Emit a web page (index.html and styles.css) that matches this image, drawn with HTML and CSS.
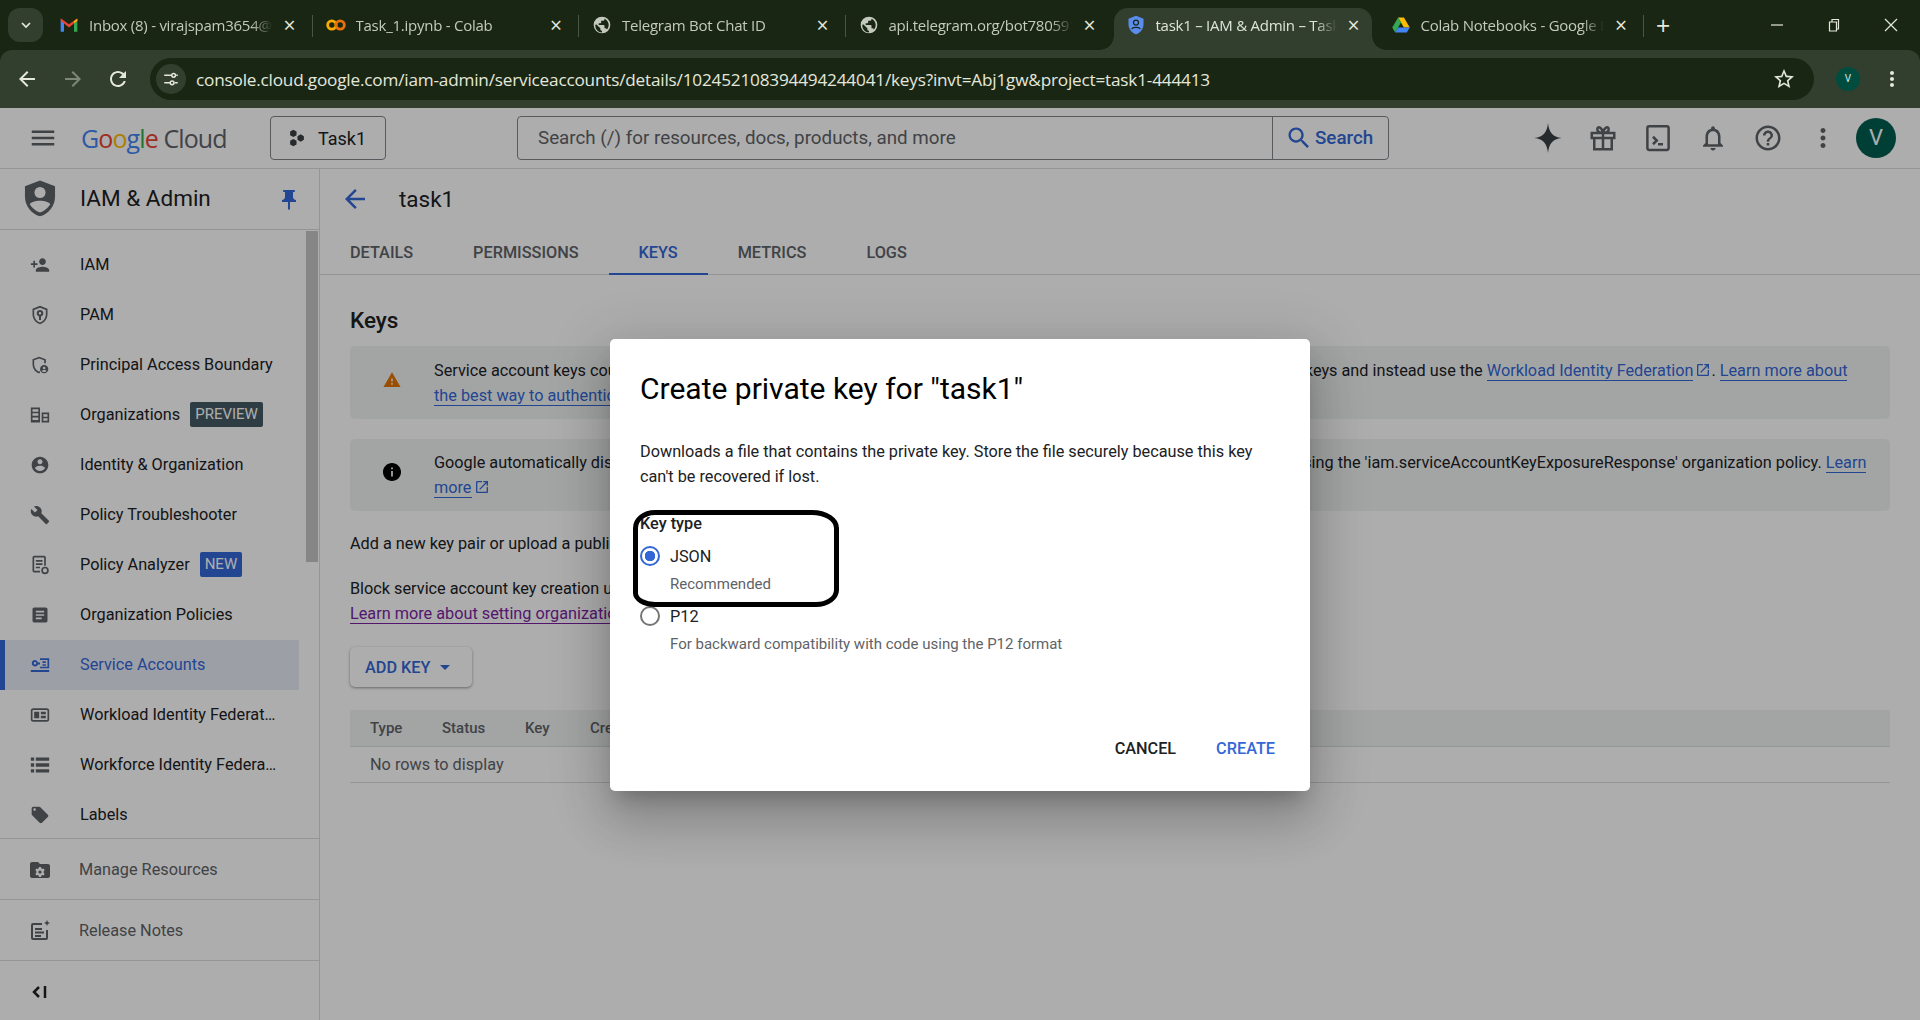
FILE: index.html
```html
<!DOCTYPE html>
<html>
  <head>
    <title>task1 – IAM &amp; Admin</title>
    <link rel="stylesheet" href="styles.css">
  </head>
  <body>
    <!-- browser chrome -->
    <div class="browser">
    <div class="tabstrip">
      <div class="tab-search"><svg viewBox="0 0 24 24" width="16" height="16"><path d="M6 9l6 6 6-6" fill="none" stroke="#e4e8dc" stroke-width="2.6"/></svg></div>
      <div class="tab">
        <svg class="favicon" viewBox="0 0 24 24"><path d="M2 20V6l4 2v12z" fill="#4285f4"/><path d="M22 20V6l-4 2v12z" fill="#34a853"/><path d="M2 4v3l10 8V11z" fill="#ea4335"/><path d="M22 4v3l-10 8V11z" fill="#ea4335"/><path d="M18 7.500l4-3V7l-4 3z" fill="#fbbc04"/></svg>
        <span class="tab-title">Inbox (8) - virajspam3654@gmail.com</span><span class="tab-close">×</span>
      </div>
      <div class="tab">
        <svg class="favicon" viewBox="0 0 24 24"><circle cx="7" cy="12" r="5" fill="none" stroke="#f9ab00" stroke-width="3.400"/><circle cx="17" cy="12" r="5" fill="none" stroke="#e8710a" stroke-width="3.400"/></svg>
        <span class="tab-title">Task_1.ipynb - Colab</span><span class="tab-close">×</span>
      </div>
      <div class="tab">
        <svg class="favicon" viewBox="0 0 24 24"><path fill="#c4c9bd" d="M12 2a10 10 0 1 0 0 20 10 10 0 0 0 0-20zM4 12l1-1 5 5v1c0 1 1 2 2 2v1.900A8 8 0 0 1 4 12zm13.900 5.400c-.3-.8-1-1.400-1.900-1.400h-1v-3c0-.6-.4-1-1-1H8v-2h2c.6 0 1-.4 1-1V7h2c1.100 0 2-.9 2-2v-.4a8 8 0 0 1 2.900 12.800z"/></svg>
        <span class="tab-title">Telegram Bot Chat ID</span><span class="tab-close">×</span>
      </div>
      <div class="tab tab-last">
        <svg class="favicon" viewBox="0 0 24 24"><path fill="#c4c9bd" d="M12 2a10 10 0 1 0 0 20 10 10 0 0 0 0-20zM4 12l1-1 5 5v1c0 1 1 2 2 2v1.900A8 8 0 0 1 4 12zm13.900 5.400c-.3-.8-1-1.400-1.900-1.400h-1v-3c0-.6-.4-1-1-1H8v-2h2c.6 0 1-.4 1-1V7h2c1.100 0 2-.9 2-2v-.4a8 8 0 0 1 2.900 12.800z"/></svg>
        <span class="tab-title">api.telegram.org/bot7805912345</span><span class="tab-close">×</span>
      </div>
      <div class="tab tab-active">
        <svg class="favicon" viewBox="0 0 24 24"><path fill="#5b8def" d="M12 1L3 4.500V11c0 5.500 3.800 10.600 9 12 5.200-1.400 9-6.500 9-12V4.500z"/><circle cx="12" cy="9" r="3" fill="none" stroke="#1a2614" stroke-width="1.500"/><path d="M7 17c1-3 9-3 10 0" fill="none" stroke="#1a2614" stroke-width="1.500"/></svg>
        <span class="tab-title">task1 – IAM &amp; Admin – Task1 – Google Cloud</span><span class="tab-close">×</span>
      </div>
      <div class="tab">
        <svg class="favicon" viewBox="0 0 24 24"><path d="M8.500 3h7l7 12h-7z" fill="#fbbc04"/><path d="M8.500 3l-7 12 3.500 6 7-12z" fill="#34a853"/><path d="M5 21h14l3.500-6h-14z" fill="#4285f4"/></svg>
        <span class="tab-title">Colab Notebooks - Google Drive</span><span class="tab-close">×</span>
      </div>
      <div class="tab-new">+</div>
      <div class="win-controls">
        <svg viewBox="0 0 16 16" width="16" height="16"><path d="M2 8h12" stroke="#e4e8dc" stroke-width="1.200"/></svg>
        <svg viewBox="0 0 16 16" width="16" height="16"><path d="M3.500 5h7v9h-7zM6 5V2.500h6.500V12H10.500" fill="none" stroke="#e4e8dc" stroke-width="1.200"/></svg>
        <svg viewBox="0 0 16 16" width="16" height="16"><path d="M2 2l12 12M14 2L2 14" stroke="#e4e8dc" stroke-width="1.200"/></svg>
      </div>
    </div>
    <div class="toolbar">
      <svg class="tool-icon" viewBox="0 0 24 24"><path fill="#e4e8dc" d="M20 11H7.830l5.590-5.590L12 4l-8 8 8 8 1.410-1.410L7.830 13H20v-2z"/></svg>
      <svg class="tool-icon" viewBox="0 0 24 24"><path fill="#7d8878" d="M4 11h12.170l-5.590-5.590L12 4l8 8-8 8-1.410-1.410L16.170 13H4v-2z"/></svg>
      <svg class="tool-icon" viewBox="0 0 24 24"><path fill="#e4e8dc" d="M17.650 6.350C16.200 4.900 14.210 4 12 4c-4.420 0-7.990 3.580-7.990 8s3.570 8 7.990 8c3.730 0 6.840-2.550 7.730-6h-2.080c-.82 2.330-3.040 4-5.650 4-3.310 0-6-2.690-6-6s2.690-6 6-6c1.660 0 3.140.69 4.220 1.780L13 11h7V4l-2.350 2.350z"/></svg>
      <div class="omnibox">
        <div class="site-info"><svg viewBox="0 0 24 24" width="18" height="18"><path d="M3 7h9M17 17h4M3 17h8M19 7h2" stroke="#e4e8dc" stroke-width="2" fill="none"/><circle cx="15.500" cy="7" r="2.500" fill="none" stroke="#e4e8dc" stroke-width="2"/><circle cx="13.500" cy="17" r="2.500" fill="none" stroke="#e4e8dc" stroke-width="2"/></svg></div>
        <span class="url">console.cloud.google.com/iam-admin/serviceaccounts/details/102452108394494244041/keys?invt=Abj1gw&amp;project=task1-444413</span>
        <svg class="star" viewBox="0 0 24 24" width="24" height="24"><path fill="#e4e8dc" d="M22 9.240l-7.190-.62L12 2 9.190 8.630 2 9.240l5.460 4.730L5.820 21 12 17.270 18.180 21l-1.630-7.030L22 9.240zM12 15.400l-3.760 2.270 1-4.280-3.320-2.880 4.380-.38L12 6.100l1.710 4.040 4.380.38-3.320 2.880 1 4.280L12 15.400z"/></svg>
      </div>
      <div class="profile-dot">V</div>
      <svg class="tool-icon dots" viewBox="0 0 24 24"><path fill="#e4e8dc" d="M12 8c1.100 0 2-.9 2-2s-.9-2-2-2-2 .9-2 2 .9 2 2 2zm0 2c-1.100 0-2 .9-2 2s.9 2 2 2 2-.9 2-2-.9-2-2-2zm0 6c-1.100 0-2 .9-2 2s.9 2 2 2 2-.9 2-2-.9-2-2-2z"/></svg>
    </div>
    </div>

    <!-- console header -->
    <header class="appbar">
      <svg class="burger" viewBox="0 0 24 24" width="30" height="30"><path fill="#5f6368" d="M3 18h18v-2H3v2zm0-5h18v-2H3v2zm0-7v2h18V6H3z"/></svg>
      <div class="logo"><span class="g-blue">G</span><span class="g-red">o</span><span class="g-yellow">o</span><span class="g-blue">g</span><span class="g-green">l</span><span class="g-red">e</span> <span class="logo-cloud">Cloud</span></div>
      <div class="project-btn">
        <svg viewBox="0 0 24 24" width="22" height="22"><path fill="#3c4043" d="M8 3l3.500 2v4L8 11 4.500 9V5zM16 8l3.500 2v4L16 16l-3.500-2v-4zM8 13l3.500 2v4L8 21l-3.500-2v-4z"/></svg>
        <span>Task1</span>
      </div>
      <div class="searchbar">
        <span class="search-text">Search (/) for resources, docs, products, and more</span>
        <div class="search-btn">
          <svg viewBox="0 0 24 24" width="28" height="28"><path fill="#3367d6" d="M15.500 14h-.79l-.28-.27C15.410 12.590 16 11.110 16 9.500 16 5.910 13.090 3 9.500 3S3 5.910 3 9.500 5.910 16 9.500 16c1.610 0 3.090-.59 4.230-1.570l.27.28v.79l5 4.990L20.490 19l-4.990-5zm-6 0C7.010 14 5 11.990 5 9.500S7.010 5 9.500 5 14 7.010 14 9.500 11.990 14 9.500 14z"/></svg>
          <span>Search</span>
        </div>
      </div>
      <div class="app-icons">
        <svg viewBox="0 0 24 24" width="30" height="30"><path fill="#3c4043" d="M12 0c.8 7.500 3.500 11 11 12-7.500 1-10.200 4.500-11 12-.8-7.500-3.500-11-11-12 7.500-1 10.200-4.500 11-12z"/></svg>
        <svg viewBox="0 0 24 24" width="30" height="30"><path fill="none" stroke="#5f6368" stroke-width="2" d="M3 8h18v4H3zM5 12v9h14v-9M12 8v13M12 8C9 8 7 6.500 7.500 4.500S11 3 12 8zm0 0c3 0 5-1.500 4.500-3.500S13 3 12 8z"/></svg>
        <svg viewBox="0 0 24 24" width="30" height="30"><path fill="none" stroke="#5f6368" stroke-width="2" d="M5 2.500h14a1.500 1.500 0 0 1 1.500 1.500v16a1.500 1.500 0 0 1-1.500 1.500H5A1.500 1.500 0 0 1 3.500 20V4A1.500 1.500 0 0 1 5 2.500zM8 11l3 3-3 3M12 17h4"/></svg>
        <svg viewBox="0 0 24 24" width="30" height="30"><path fill="#5f6368" d="M12 22c1.100 0 2-.9 2-2h-4c0 1.100.9 2 2 2zm6-6v-5c0-3.070-1.630-5.640-4.500-6.320V4c0-.83-.67-1.500-1.500-1.500s-1.500.67-1.500 1.500v.68C7.640 5.360 6 7.920 6 11v5l-2 2v1h16v-1l-2-2zm-2 1H8v-6c0-2.480 1.510-4.500 4-4.500s4 2.020 4 4.500v6z"/></svg>
        <svg viewBox="0 0 24 24" width="30" height="30"><path fill="#5f6368" d="M11 18h2v-2h-2v2zm1-16C6.480 2 2 6.480 2 12s4.480 10 10 10 10-4.480 10-10S17.520 2 12 2zm0 18c-4.410 0-8-3.590-8-8s3.590-8 8-8 8 3.590 8 8-3.590 8-8 8zm0-14c-2.210 0-4 1.790-4 4h2c0-1.100.9-2 2-2s2 .9 2 2c0 2-3 1.750-3 5h2c0-2.250 3-2.500 3-5 0-2.210-1.790-4-4-4z"/></svg>
        <svg viewBox="0 0 24 24" width="30" height="30"><path fill="#5f6368" d="M12 8c1.100 0 2-.9 2-2s-.9-2-2-2-2 .9-2 2 .9 2 2 2zm0 2c-1.100 0-2 .9-2 2s.9 2 2 2 2-.9 2-2-.9-2-2-2zm0 6c-1.100 0-2 .9-2 2s.9 2 2 2 2-.9 2-2-.9-2-2-2z"/></svg>
      </div>
      <div class="avatar">V</div>
    </header>

    <div class="console">
      <aside class="sidebar">
        <div class="side-head">
          <svg class="side-shield" viewBox="0 0 24 24" width="38" height="38"><path fill="#5f6368" d="M12 1L2.500 4.500V11c0 5.800 4 11 9.500 12.500 5.500-1.500 9.500-6.700 9.500-12.500V4.500z"/><circle cx="12" cy="8.500" r="3.500" fill="#fff"/><path d="M5.500 16c1.500-3 11.500-3 13 0-1.500 2.500-3.800 4.300-6.500 5.200-2.700-.9-5-2.700-6.500-5.200z" fill="#fff"/></svg>
          <span class="side-title">IAM &amp; Admin</span>
          <svg class="side-pin" viewBox="0 0 24 24" width="24" height="24"><path fill="#3367d6" d="M16 9V4h1c.55 0 1-.45 1-1s-.45-1-1-1H7c-.55 0-1 .45-1 1s.45 1 1 1h1v5c0 1.660-1.340 3-3 3v2h5.970v7l1 1 1-1v-7H19v-2c-1.660 0-3-1.340-3-3z"/></svg>
        </div>
        <nav class="side-nav">
          <a class="nav-item"><svg viewBox="0 0 24 24"><path d="M15 12c2.210 0 4-1.790 4-4s-1.790-4-4-4-4 1.790-4 4 1.790 4 4 4zm-9-2V7H4v3H1v2h3v3h2v-3h3v-2H6zm9 4c-2.670 0-8 1.340-8 4v2h16v-2c0-2.660-5.330-4-8-4z"/></svg><span>IAM</span></a>
          <a class="nav-item"><svg viewBox="0 0 24 24"><path d="M12 1L3 4.500v6.600c0 5.500 3.800 10.600 9 11.900 5.200-1.300 9-6.400 9-11.900V4.500zm7 10.100c0 4.500-3 8.700-7 9.900-4-1.200-7-5.400-7-9.900V5.900l7-2.700 7 2.700z"/><path d="M12 6a4 4 0 0 0-1.200 7.800V18h2.400v-4.200A4 4 0 0 0 12 6zm0 5.500a1.500 1.500 0 1 1 0-3 1.500 1.500 0 0 1 0 3z"/></svg><span>PAM</span></a>
          <a class="nav-item"><svg viewBox="0 0 24 24"><path d="M11 2L3 5v6c0 5 3.400 9.700 8 11l1-.4v-2.200l-1 .5c-3.400-1.100-6-4.900-6-8.900V6.400l6-2.300 6 2.300V10h2V5z"/><path d="M17 12a5 5 0 1 0 0 10 5 5 0 0 0 0-10zm0 2a1.500 1.500 0 1 1 0 3 1.500 1.500 0 0 1 0-3zm0 6.500c-1.200 0-2.200-.5-2.800-1.400.4-.8 1.800-1.100 2.800-1.100s2.400.3 2.800 1.100c-.6.900-1.600 1.400-2.800 1.400z"/></svg><span>Principal Access Boundary</span></a>
          <a class="nav-item"><svg viewBox="0 0 24 24"><path d="M1 3h11v18H1zm2 2v3h7V5zm0 5v3h7v-3zm0 5v3h7v-3zM14 9h9v12h-9zm2 2v3h5v-3zm0 5v3h5v-3z"/></svg><span>Organizations</span><span class="badge badge-dark">PREVIEW</span></a>
          <a class="nav-item"><svg viewBox="0 0 24 24"><path d="M12 2C6.480 2 2 6.480 2 12s4.480 10 10 10 10-4.480 10-10S17.520 2 12 2zm0 3c1.660 0 3 1.340 3 3s-1.340 3-3 3-3-1.340-3-3 1.340-3 3-3zm0 14.200c-2.500 0-4.710-1.280-6-3.220.03-1.990 4-3.080 6-3.080 1.990 0 5.970 1.090 6 3.080-1.290 1.940-3.500 3.220-6 3.220z"/></svg><span>Identity &amp; Organization</span></a>
          <a class="nav-item"><svg viewBox="0 0 24 24"><path d="M22.700 19l-9.100-9.100c.9-2.300.4-5-1.500-6.900-2-2-5-2.400-7.400-1.300L9 6 6 9 1.600 4.700C.4 7.100.9 10.100 2.900 12.100c1.900 1.900 4.600 2.400 6.900 1.500l9.100 9.100c.4.400 1 .4 1.400 0l2.300-2.300c.5-.4.5-1.100.1-1.400z"/></svg><span>Policy Troubleshooter</span></a>
          <a class="nav-item"><svg viewBox="0 0 24 24"><path d="M5 1h12a2 2 0 0 1 2 2v10h-2V3H5v16h7v2H5a2 2 0 0 1-2-2V3a2 2 0 0 1 2-2zM7 6h8v2H7zm0 4h8v2H7zm0 4h5v2H7z"/><path d="M18 14a4.500 4.500 0 1 0 0 9 4.500 4.500 0 0 0 0-9zm0 7a2.500 2.500 0 1 1 0-5 2.500 2.500 0 0 1 0 5z"/></svg><span>Policy Analyzer</span><span class="badge badge-blue">NEW</span></a>
          <a class="nav-item"><svg viewBox="0 0 24 24"><path d="M19 3H5c-1.100 0-2 .9-2 2v14c0 1.100.9 2 2 2h14c1.100 0 2-.9 2-2V5c0-1.100-.9-2-2-2zm-5 14H7v-2h7v2zm3-4H7v-2h10v2zm0-4H7V7h10v2z"/></svg><span>Organization Policies</span></a>
          <a class="nav-item nav-active"><svg viewBox="0 0 24 24"><path d="M1 18h22v2.500H1zM6 6a3.800 3.800 0 1 0 3.500 5.300H12V9H9.500A3.800 3.800 0 0 0 6 6zm0 5.300a1.500 1.500 0 1 1 0-3 1.500 1.500 0 0 1 0 3zM12 4h11v12H12v-2h9V6h-9zm3 3.500h4v2h-4zm0 3.500h4v2h-4z"/></svg><span>Service Accounts</span></a>
          <a class="nav-item"><svg viewBox="0 0 24 24"><path d="M20 4H4a3 3 0 0 0-3 3v10a3 3 0 0 0 3 3h16a3 3 0 0 0 3-3V7a3 3 0 0 0-3-3zm1 13a1 1 0 0 1-1 1H4a1 1 0 0 1-1-1V7a1 1 0 0 1 1-1h16a1 1 0 0 1 1 1zM5 8h6v8H5zm8 0h6v3h-6zm0 5h6v3h-6z"/></svg><span>Workload Identity Federation</span></a>
          <a class="nav-item"><svg viewBox="0 0 24 24"><path d="M1 3h4v4H1zm6 0h16v4H7zM1 10h4v4H1zm6 0h16v4H7zM1 17h4v4H1zm6 0h16v4H7z"/></svg><span>Workforce Identity Federation</span></a>
          <a class="nav-item"><svg viewBox="0 0 24 24"><path d="M21.410 11.580l-9-9C12.050 2.220 11.550 2 11 2H4c-1.100 0-2 .9-2 2v7c0 .55.22 1.050.59 1.420l9 9c.36.36.86.58 1.410.58.55 0 1.050-.22 1.410-.59l7-7c.37-.36.59-.86.59-1.410 0-.55-.23-1.060-.59-1.420zM5.500 7C4.670 7 4 6.330 4 5.500S4.670 4 5.500 4 7 4.670 7 5.500 6.330 7 5.500 7z"/></svg><span>Labels</span></a>
          <div class="scroll-thumb"></div>
        </nav>
        <a class="side-foot"><svg viewBox="0 0 24 24"><path d="M20 6h-8l-2-2H4c-1.100 0-2 .9-2 2v12c0 1.100.9 2 2 2h16c1.100 0 2-.9 2-2V8c0-1.100-.9-2-2-2z"/><path fill="#fff" d="M11 9h2l.3 1.300 1.100.6 1.300-.4 1 1.700-1 .9v1.800l1 .9-1 1.700-1.300-.4-1.100.6L13 19h-2l-.3-1.300-1.100-.6-1.300.4-1-1.700 1-.9v-1.800l-1-.9 1-1.700 1.300.4 1.100-.6z"/><circle cx="12" cy="14" r="1.600"/></svg><span>Manage Resources</span></a>
        <a class="side-foot"><svg viewBox="0 0 24 24"><path d="M14 4H5a2 2 0 0 0-2 2v13a2 2 0 0 0 2 2h13a2 2 0 0 0 2-2v-8h-2v8H5V6h9zM7 9h7v2H7zm0 3.500h9v2H7zM7 16h6v2H7zM19 1l.9 2.100L22 4l-2.100.9L19 7l-.9-2.100L16 4l2.100-.9z"/></svg><span>Release Notes</span></a>
        <a class="side-foot side-collapse"><svg viewBox="0 0 24 24"><path d="M11 7l-5 5 5 5M17 6v12" fill="none" stroke="#202124" stroke-width="2.500"/></svg></a>
      </aside>

      <main class="main">
        <div class="main-head">
          <svg viewBox="0 0 24 24" width="30" height="30"><path fill="#3367d6" d="M20 11H7.830l5.590-5.590L12 4l-8 8 8 8 1.410-1.410L7.830 13H20v-2z"/></svg>
          <h1>task1</h1>
        </div>
        <div class="tabs">
          <a class="page-tab">DETAILS</a>
          <a class="page-tab">PERMISSIONS</a>
          <a class="page-tab page-tab-on">KEYS</a>
          <a class="page-tab">METRICS</a>
          <a class="page-tab">LOGS</a>
        </div>
        <section class="content">
          <h2>Keys</h2>
          <div class="banner">
            <svg viewBox="-3.500 -3.500 31 31" width="24" height="24"><path fill="#e37400" d="M1 21h22L12 2 1 21zm12-3h-2v-2h2v2zm0-4h-2v-4h2v4z"/></svg>
            <p>Service account keys could pose a security risk if compromised. We recommend you avoid downloading service account keys and instead use the <a class="link">Workload Identity Federation</a><svg class="ext" viewBox="0 0 24 24"><path d="M19 19H5V5h7V3H5c-1.110 0-2 .9-2 2v14c0 1.100.89 2 2 2h14c1.100 0 2-.9 2-2v-7h-2v7zM14 3v2h3.590l-9.830 9.830 1.410 1.410L19 6.410V10h2V3h-7z"/></svg>. <a class="link">Learn more about the best way to authenticate service accounts on Google Cloud here</a>.</p>
          </div>
          <div class="banner banner-info">
            <svg viewBox="-1.300 -1.300 26.600 26.600" width="24" height="24"><path fill="#000" d="M12 2C6.480 2 2 6.480 2 12s4.480 10 10 10 10-4.480 10-10S17.520 2 12 2zm1 15h-2v-6h2v6zm0-8h-2V7h2v2z"/></svg>
            <p>Google automatically disables service account keys detected in public repositories. You can customize this behavior by using the 'iam.serviceAccountKeyExposureResponse' organization policy. <a class="link">Learn more</a><svg class="ext" viewBox="0 0 24 24"><path d="M19 19H5V5h7V3H5c-1.110 0-2 .9-2 2v14c0 1.100.89 2 2 2h14c1.100 0 2-.9 2-2v-7h-2v7zM14 3v2h3.590l-9.830 9.830 1.410 1.410L19 6.410V10h2V3h-7z"/></svg></p>
          </div>
          <p class="para">Add a new key pair or upload a public key certificate from an existing key pair.</p>
          <p class="para para-last">Block service account key creation using organization policies.<br><a class="link link-visited">Learn more about setting organization policies for service accounts</a></p>
          <button class="add-key">ADD KEY<i class="caret"></i></button>
          <table class="key-table">
            <thead><tr><th class="col-type">Type</th><th class="col-status">Status</th><th class="col-key">Key</th><th class="col-created">Creation date</th><th class="col-expires">Expiration date</th><th></th></tr></thead>
            <tbody><tr><td colspan="6">No rows to display</td></tr></tbody>
          </table>
        </section>
      </main>
    </div>

    <div class="scrim"></div>
    <div class="dialog">
      <h3>Create private key for "task1"</h3>
      <p class="dialog-text">Downloads a file that contains the private key. Store the file securely because this key can't be recovered if lost.</p>
      <div class="key-label">Key type</div>
      <div class="option"><span class="radio radio-on"></span><span>JSON</span></div>
      <div class="option-hint">Recommended</div>
      <div class="option option-p12"><span class="radio"></span><span>P12</span></div>
      <div class="option-hint">For backward compatibility with code using the P12 format</div>
      <div class="actions">
        <a class="btn">CANCEL</a>
        <a class="btn btn-blue">CREATE</a>
      </div>
      <div class="marker"></div>
    </div>
  </body>
</html>
```

FILE: styles.css
```css
* {
  box-sizing: border-box;
}

html,
body {
  margin: 0;
  height: 1020px;
  overflow: hidden;
}

body {
  position: relative;
  font-family: Roboto, sans-serif;
  font-size: 16.25px;
  color: #202124;
  background: #fff;
}

/* browser chrome */
.browser {
  background: #1a2614;
}

.tabstrip {
  height: 50px;
  display: flex;
  align-items: flex-end;
  padding-left: 8px;
  font-family: "Open Sans", sans-serif;
  font-size: 15px;
  color: #c4cabd;
}

.tab-search {
  width: 35px;
  height: 34px;
  margin-bottom: 8px;
  margin-right: 4px;
  border-radius: 12px;
  background: #333f2e;
  display: flex;
  align-items: center;
  justify-content: center;
}

.tab {
  width: 266.500px;
  height: 42px;
  padding: 0 15px 8px 12px;
  display: flex;
  align-items: center;
  position: relative;
}

.tab::after {
  content: "";
  position: absolute;
  right: 1px;
  top: 7px;
  height: 22px;
  width: 1px;
  background: #4a5544;
}

.tab-last {
  width: 267px;
}

.tab-last::after {
  display: none;
}

.tab-active {
  width: 258px;
  padding-right: 9px;
  background: #333f2e;
  border-radius: 14px 14px 0 0;
  margin-right: 7px;
  color: #dfe3d8;
}

/* the flared foot of the selected tab */
.tab-active::before,
.tab-active::after {
  content: "";
  position: absolute;
  top: auto;
  bottom: 0;
  width: 14px;
  height: 14px;
}

.tab-active::before {
  left: -14px;
  background: radial-gradient(circle at 0 0, #1a2614 13.500px, #333f2e 14px);
}

.tab-active::after {
  right: -14px;
  background: radial-gradient(circle at 100% 0, #1a2614 13.500px, #333f2e 14px);
}

.favicon {
  width: 20px;
  height: 20px;
  flex: none;
  margin-right: 10px;
}

.tab-title {
  flex: 1;
  white-space: nowrap;
  overflow: hidden;
  letter-spacing: -0.25px;
  -webkit-mask-image: linear-gradient(to left, transparent 0, #000 22px);
  mask-image: linear-gradient(to left, transparent 0, #000 22px);
}

.tab-close {
  flex: none;
  width: 18px;
  margin-left: 8px;
  text-align: center;
  font-size: 21px;
  line-height: 20px;
  color: #e4e8dc;
}

.tab-new {
  margin: 0 0 8px 11px;
  font-size: 25px;
  line-height: 34px;
  color: #e4e8dc;
}

.win-controls {
  margin-left: auto;
  width: 151px;
  height: 50px;
  padding: 0 21px 0 0;
  display: flex;
  align-items: center;
  justify-content: space-between;
}

.toolbar {
  height: 58px;
  background: #333f2e;
  border-radius: 12px 12px 0 0;
  display: flex;
  align-items: center;
  padding: 0 15px;
}

.tool-icon {
  width: 24px;
  height: 24px;
  flex: none;
  margin-right: 21.500px;
}

.omnibox {
  width: 1664px;
  height: 42px;
  margin-left: -1.500px;
  padding-left: 6px;
  background: #1a2614;
  border-radius: 21px;
  display: flex;
  align-items: center;
  color: #e4e8dc;
  flex: none;
}

.site-info {
  width: 30px;
  height: 30px;
  border-radius: 50%;
  background: #333f2e;
  display: flex;
  align-items: center;
  justify-content: center;
  flex: none;
}

.url {
  margin-left: 10px;
  font-family: "Open Sans", sans-serif;
  font-size: 17.200px;
  letter-spacing: -0.2px;
  white-space: nowrap;
}

.star {
  margin-left: auto;
  margin-right: 18px;
}

.profile-dot {
  width: 24px;
  height: 24px;
  margin-left: 22px;
  border-radius: 50%;
  background: #004d40;
  color: #d7e8e2;
  font-size: 10px;
  line-height: 24px;
  text-align: center;
  flex: none;
}

.tool-icon.dots {
  margin: 0 0 0 20px;
}

/* console header */
.appbar {
  height: 61px;
  border-bottom: 1px solid #dadce0;
  display: flex;
  align-items: center;
  position: relative;
}

.burger {
  margin-left: 28px;
  flex: none;
}

.logo {
  margin-left: 23px;
  width: 147px;
  font-family: "Open Sans", sans-serif;
  font-size: 25px;
  letter-spacing: -0.9px;
  white-space: nowrap;
  margin-bottom: 1px;
}

.g-blue { color: #4285f4; }
.g-red { color: #ea4335; }
.g-yellow { color: #fbbc04; }
.g-green { color: #34a853; }
.logo-cloud { color: #5f6368; }

.project-btn {
  margin-left: 42px;
  width: 116px;
  height: 44px;
  border: 1px solid #80868b;
  border-radius: 4px;
  display: flex;
  align-items: center;
  gap: 10px;
  padding-left: 15px;
  font-size: 18px;
  color: #202124;
}

.searchbar {
  margin-left: 131px;
  width: 872px;
  height: 44px;
  border: 1px solid #80868b;
  border-radius: 4px;
  display: flex;
  align-items: center;
  font-size: 18.800px;
  color: #5f6368;
}

.search-text {
  flex: 1;
  padding-left: 20px;
}

.search-btn {
  width: 116px;
  height: 100%;
  border-left: 1px solid #80868b;
  display: flex;
  align-items: center;
  gap: 2px;
  padding-left: 12px;
  color: #3367d6;
  font-size: 18.800px;
  font-weight: 500;
}

.app-icons {
  margin-left: 144px;
  display: flex;
  gap: 25px;
  align-items: center;
}

.avatar {
  width: 40px;
  height: 40px;
  margin-left: 18px;
  border-radius: 50%;
  background: #005d4e;
  color: #fff;
  font-size: 22px;
  line-height: 40px;
  text-align: center;
}

.console {
  display: flex;
  height: 851px;
}

/* sidebar */
.sidebar {
  width: 320px;
  flex: none;
  border-right: 1px solid #dadce0;
  display: flex;
  flex-direction: column;
}

.side-head {
  height: 61px;
  flex: none;
  border-bottom: 1px solid #dadce0;
  display: flex;
  align-items: center;
  padding: 0 0 2px 21px;
  position: relative;
}

.side-title {
  margin-left: 21px;
  font-size: 22.500px;
  color: #202124;
}

.side-pin {
  margin: 4px 18px 0 auto;
}

.side-nav {
  flex: 1;
  position: relative;
  padding-top: 10px;
  overflow: hidden;
  min-height: 0;
}

.nav-item {
  display: flex;
  align-items: center;
  height: 50px;
  padding: 0 0 1px 30px;
  color: #202124;
}

.nav-item svg {
  width: 20px;
  height: 20px;
  flex: none;
  margin-right: 30px;
  fill: #5f6368;
}

.nav-item > span:first-of-type {
  max-width: 199px;
  white-space: nowrap;
  overflow: hidden;
  text-overflow: ellipsis;
}

.nav-active {
  width: 299px;
  padding-left: 25px;
  border-left: 5px solid #3367d6;
  background: #e8eaf6;
  color: #3367d6;
}

.nav-active svg {
  fill: #3367d6;
}

.badge {
  margin-left: 10px;
  height: 25px;
  padding: 0 5px;
  border-radius: 2px;
  font-size: 15px;
  line-height: 25px;
  color: #fff;
}

.badge-dark { background: #455a64; }
.badge-blue { background: #3367d6; }

.scroll-thumb {
  position: absolute;
  left: 306px;
  top: 1px;
  width: 12px;
  height: 331px;
  background: #c6c6c6;
}

.side-foot {
  display: flex;
  align-items: center;
  height: 61px;
  flex: none;
  padding: 1px 0 0 28px;
  border-top: 1px solid #dadce0;
  color: #5f6368;
}

.side-foot svg {
  width: 24px;
  height: 24px;
  flex: none;
  margin-right: 27px;
  fill: #5f6368;
}

.side-collapse {
  height: 60px;
  padding-top: 3px;
}

/* main area */
.main {
  flex: 1;
  min-width: 0;
}

.main-head {
  height: 61px;
  display: flex;
  align-items: center;
  padding: 0 0 2px 20px;
}

.main-head h1 {
  margin: 0 0 0 29px;
  font-size: 22.500px;
  font-weight: 400;
}

.tabs {
  height: 46px;
  border-bottom: 1px solid #dadce0;
  display: flex;
  padding-left: 0;
  margin-top: -1px;
}

.page-tab {
  padding: 0 30px;
  line-height: 47.500px;
  font-size: 16.250px;
  font-weight: 500;
  color: #5f6368;
}

.page-tab-on {
  color: #3367d6;
  border-bottom: 2px solid #3367d6;
  height: 46px;
}

.content {
  padding: 30px 30px 0;
}

.content h2 {
  margin: 0 0 11px;
  font-size: 22.500px;
  line-height: 30px;
  font-weight: 500;
}

.banner {
  display: flex;
  align-items: center;
  background: #f1f3f4;
  border-radius: 5px;
  padding: 12px 21px 11px 30px;
  margin-bottom: 20px;
  height: 73px;
}

.banner-info {
  height: 72px;
  padding-top: 11px;
  padding-bottom: 11px;
}

.banner > svg {
  flex: none;
  margin-right: 30px;
  margin-top: -6px;
}

.banner-info > svg {
  margin-top: -7px;
}

.banner p {
  margin: 0;
  line-height: 25px;
}

.ext {
  width: 16px;
  height: 16px;
  margin-left: 2px;
  fill: #3367d6;
  vertical-align: -2px;
}

.link {
  color: #3367d6;
  border-bottom: 1px solid #3367d6;
}

.link-visited {
  color: #7b1fa2;
  border-bottom-color: #7b1fa2;
}

.para {
  margin: 0 0 20px;
  line-height: 25px;
}

.para-last {
  margin-bottom: 21px;
}

.add-key {
  display: flex;
  align-items: center;
  width: 122px;
  height: 40px;
  padding: 0 0 0 15px;
  border: 0;
  border-radius: 5px;
  background: #fff;
  box-shadow: 0 1px 3px rgba(0, 0, 0, 0.4);
  font-family: Roboto, sans-serif;
  font-size: 16.250px;
  font-weight: 500;
  color: #3367d6;
}

.caret {
  margin-left: 10px;
  border-left: 5.500px solid transparent;
  border-right: 5.500px solid transparent;
  border-top: 5.500px solid #3367d6;
}

.key-table {
  width: 100%;
  margin-top: 23px;
  border-collapse: collapse;
}

.key-table th {
  height: 36px;
  padding: 0 0 0 20px;
  text-align: left;
  font-size: 15px;
  font-weight: 500;
  color: #5f6368;
  background: #f1f3f4;
  border-bottom: 1px solid #dadce0;
}

.key-table .col-type { width: 72px; }
.key-table .col-status { width: 83px; }
.key-table .col-key { width: 65px; }
.key-table .col-created { width: 150px; }
.key-table .col-expires { width: 150px; }

.key-table td {
  height: 36px;
  padding-left: 20px;
  color: #5f6368;
  border-bottom: 1px solid #dadce0;
}

/* dialog */
.scrim {
  position: absolute;
  left: 0;
  right: 0;
  top: 108px;
  bottom: 0;
  background: rgba(0, 0, 0, 0.32);
}

.dialog {
  position: absolute;
  left: 610px;
  top: 339px;
  width: 700px;
  height: 452px;
  padding: 34px 30px 0;
  background: #fff;
  border-radius: 5px;
  display: flex;
  flex-direction: column;
  box-shadow: 0 14px 18px -8px rgba(0, 0, 0, 0.2), 0 30px 48px 4px rgba(0, 0, 0, 0.14), 0 11px 58px 10px rgba(0, 0, 0, 0.12);
}

.dialog h3 {
  margin: 0;
  font-size: 30px;
  line-height: 32px;
  font-weight: 400;
  color: #000;
}

.dialog-text {
  margin: 34px 0 0;
  line-height: 25px;
  color: #202124;
}

.key-label {
  margin-top: 25px;
  line-height: 20px;
  font-weight: 500;
  color: #202124;
}

.option {
  display: flex;
  align-items: center;
  margin-top: 12px;
  height: 20px;
  font-size: 16.250px;
  color: #202124;
}

.option-p12 {
  margin-top: 12px;
}

.radio {
  width: 20px;
  height: 20px;
  margin-right: 10px;
  border: 2px solid #757575;
  border-radius: 50%;
  flex: none;
}

.radio-on {
  border-color: #3367d6;
  background: radial-gradient(circle, #3367d6 0, #3367d6 5px, transparent 5.500px);
}

.option-hint {
  margin: 8px 0 0 30px;
  line-height: 20px;
  font-size: 15px;
  color: #5f6368;
}

.actions {
  margin-top: auto;
  height: 58px;
  padding-right: 5px;
  display: flex;
  justify-content: flex-end;
  gap: 40px;
}

.btn {
  font-weight: 500;
  font-size: 16.250px;
  line-height: 32px;
  color: #202124;
}

.btn-blue {
  color: #3367d6;
}

/* hand drawn ring round the JSON option */
.marker {
  position: absolute;
  left: 23px;
  top: 171px;
  width: 206px;
  height: 97px;
  border: 5px solid #000;
  border-radius: 22px 27px 23px 22px / 18px 18px 17px 14px;
}
```
